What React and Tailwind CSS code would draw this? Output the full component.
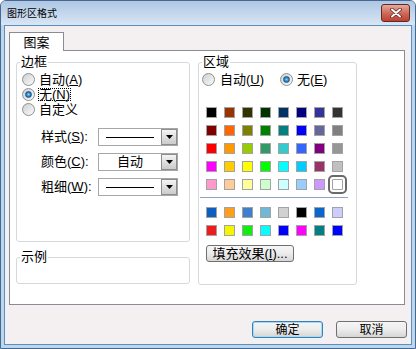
import React from "react";

const FONT = "font-['Liberation_Sans','Noto_Sans_CJK_SC',sans-serif]";

const PALETTE = [
  "bg-[#000000]", "bg-[#993300]", "bg-[#333300]", "bg-[#003300]", "bg-[#003366]", "bg-[#000080]", "bg-[#333399]", "bg-[#333333]",
  "bg-[#800000]", "bg-[#ff6600]", "bg-[#808000]", "bg-[#008000]", "bg-[#008080]", "bg-[#0000ff]", "bg-[#666699]", "bg-[#808080]",
  "bg-[#ff0000]", "bg-[#ff9900]", "bg-[#99cc00]", "bg-[#339966]", "bg-[#33cccc]", "bg-[#3366ff]", "bg-[#800080]", "bg-[#969696]",
  "bg-[#ff00ff]", "bg-[#ffcc00]", "bg-[#ffff00]", "bg-[#00ff00]", "bg-[#00ffff]", "bg-[#00ccff]", "bg-[#993366]", "bg-[#c0c0c0]",
  "bg-[#ff99cc]", "bg-[#ffcc99]", "bg-[#ffff99]", "bg-[#ccffcc]", "bg-[#ccffff]", "bg-[#99ccff]", "bg-[#cc99ff]", "bg-[#ffffff]",
];

const CHART = [
  "bg-[#0c5fbd]", "bg-[#ff9d1c]", "bg-[#3f80cc]", "bg-[#72b7d5]", "bg-[#d1d1d1]", "bg-[#000000]", "bg-[#0a66cc]", "bg-[#ccccff]",
  "bg-[#ee1c1c]", "bg-[#f5f500]", "bg-[#10ee10]", "bg-[#00ffff]", "bg-[#0000ff]", "bg-[#ff00ff]", "bg-[#008080]", "bg-[#0000ff]",
];

const Radio = ({ checked }) => (
  <span className="flex h-[13px] w-[13px] shrink-0 items-center justify-center rounded-full border border-[#8e9091] bg-linear-to-br from-[#cfcfcf] to-[#fbfbfb]">
    {checked && (
      <span className="h-[7px] w-[7px] rounded-full border border-[#1c5a92] bg-radial from-[#8fd8fb] via-[#2e86c6] to-[#164f8a]" />
    )}
  </span>
);

const Select = ({ children }) => (
  <div className="flex h-[18px] w-[80px] border border-[#a5a7ab] bg-white">
    <div className="flex flex-1 items-center justify-center">{children}</div>
    <div className="flex w-[16px] items-center justify-center border border-[#8d8d8d] bg-linear-to-b from-[#f4f4f4] to-[#cbcbcb]">
      <svg width="7" height="4" viewBox="0 0 7 4">
        <path d="M0 0h7L3.5 4z" fill="#000" />
      </svg>
    </div>
  </div>
);

const Line = () => <div className="h-px w-[48px] bg-black" />;

const Swatch = ({ color, selected }) => (
  <div
    className={
      selected
        ? `h-[11px] w-[11px] border border-[#a3a3a3] ${color} rounded-[1px] outline-2 outline-solid outline-[#6a6a6a] outline-offset-[2px]`
        : `h-[11px] w-[11px] border border-[#a3a3a3] ${color}`
    }
  />
);

const Button = ({ children, primary, className = "" }) => (
  <div
    className={`flex h-[17px] items-center justify-center rounded-[3px] border bg-linear-to-b from-[#f6f6f6] via-[#ececec] to-[#d6d6d6] text-[12px] leading-none ${
      primary ? "border-[#3c7fb1] shadow-[inset_0_0_0_1px_#9fdcf8]" : "border-[#707070]"
    } ${className}`}
  >
    {children}
  </div>
);

const Legend = ({ children }) => (
  <legend className="ml-[3px] px-[1px] text-[13px] leading-[14px]">{children}</legend>
);

export default function App() {
  return (
    <div className={`flex h-[349px] w-[416px] flex-col overflow-hidden rounded-t-[6px] border border-[#48698f] bg-[#bcd6ee] text-black ${FONT}`}>
      <div className="flex h-[24px] items-start justify-between bg-linear-to-b from-[#aec7e4] to-[#d9e6f4] pl-[6px] pr-[5px]">
        <span className="mt-[7px] text-[10px] leading-[12px]">图形区格式</span>
        <div className="mt-[3px] flex h-[18px] w-[29px] items-center justify-center rounded-[3px] border border-[#5e2a22] bg-linear-to-b from-[#e6a99e] via-[#cf6a5c] to-[#c23e2e]">
          <svg width="12" height="10" viewBox="0 0 12 10">
            <path d="M2 1.5l8 7M10 1.5l-8 7" stroke="#5a2b24" strokeWidth="3.6" strokeLinecap="round" />
            <path d="M2 1.5l8 7M10 1.5l-8 7" stroke="#fff" strokeWidth="2" strokeLinecap="round" />
          </svg>
        </div>
      </div>

      <div className="mx-[3px] mb-[3px] flex flex-1 flex-col border border-[#5b8fc0] bg-[#f4f0f2]">
        <div className="relative z-10 ml-[4px] mt-[6px] -mb-px flex h-[19px] w-[55px] items-center justify-center border border-b-0 border-[#898c95] bg-white text-[13px] leading-none">
          图案
        </div>

        <div className="ml-[4px] flex h-[255px] w-[396px] gap-[8px] border border-[#898c95] bg-white pl-[6px] pt-[4px]">
          <div className="flex w-[174px] flex-col">
            <fieldset className="h-[187px] rounded-[3px] border border-[#d5d9dc] px-0">
              <Legend>边框</Legend>
              <div className="flex flex-col pl-[5px] pt-[3px] text-[13px] leading-[15px]">
                <div className="flex h-[15px] items-center gap-[4px]">
                  <Radio />
                  <span>自动(<u>A</u>)</span>
                </div>
                <div className="flex h-[15px] items-center gap-[3px]">
                  <Radio checked />
                  <span className="border border-dotted border-black px-0 leading-[11px]">无(<u>N</u>)</span>
                </div>
                <div className="flex h-[15px] items-center gap-[4px]">
                  <Radio />
                  <span>自定义</span>
                </div>
              </div>
              <div className="mt-[11px] flex flex-col gap-[7px] pl-[24px] text-[13px] leading-[18px]">
                <div className="flex items-center">
                  <span className="w-[57px]">样式(<u>S</u>):</span>
                  <Select>
                    <Line />
                  </Select>
                </div>
                <div className="flex items-center">
                  <span className="w-[57px]">颜色(<u>C</u>):</span>
                  <Select>
                    <span className="text-[13px]">自动</span>
                  </Select>
                </div>
                <div className="flex items-center">
                  <span className="w-[57px]">粗细(<u>W</u>):</span>
                  <Select>
                    <Line />
                  </Select>
                </div>
              </div>
            </fieldset>
            <fieldset className="mt-[8px] h-[34px] rounded-[3px] border border-[#d5d9dc] px-0">
              <Legend>示例</Legend>
            </fieldset>
          </div>

          <fieldset className="h-[230px] w-[159px] rounded-[3px] border border-[#d5d9dc] px-0">
            <Legend>区域</Legend>
            <div className="flex pl-[3px] pt-[3px] text-[13px] leading-[15px]">
              <div className="flex h-[15px] w-[78px] items-center gap-[5px]">
                <Radio />
                <span>自动(<u>U</u>)</span>
              </div>
              <div className="flex h-[15px] items-center gap-[4px]">
                <Radio checked />
                <span>无(<u>E</u>)</span>
              </div>
            </div>
            <div className="ml-[7px] mt-[20px] grid grid-cols-[repeat(8,11px)] gap-[7px]">
              {PALETTE.map((c, i) => (
                <Swatch key={i} color={c} selected={i === PALETTE.length - 1} />
              ))}
            </div>
            <div className="ml-[1px] mt-[7px] h-px w-[148px] bg-[#8ea3c2]" />
            <div className="ml-[7px] mt-[9px] grid grid-cols-[repeat(8,11px)] gap-[7px]">
              {CHART.map((c, i) => (
                <Swatch key={i} color={c} />
              ))}
            </div>
            <Button className="ml-[7px] mt-[9px] w-[88px] text-[13px]">填充效果(<u>I</u>)...</Button>
          </fieldset>
        </div>

        <div className="mt-[16px] flex justify-end gap-[13px] pr-[4px]">
          <Button primary className="w-[71px]">确定</Button>
          <Button className="w-[71px]">取消</Button>
        </div>
      </div>
    </div>
  );
}
